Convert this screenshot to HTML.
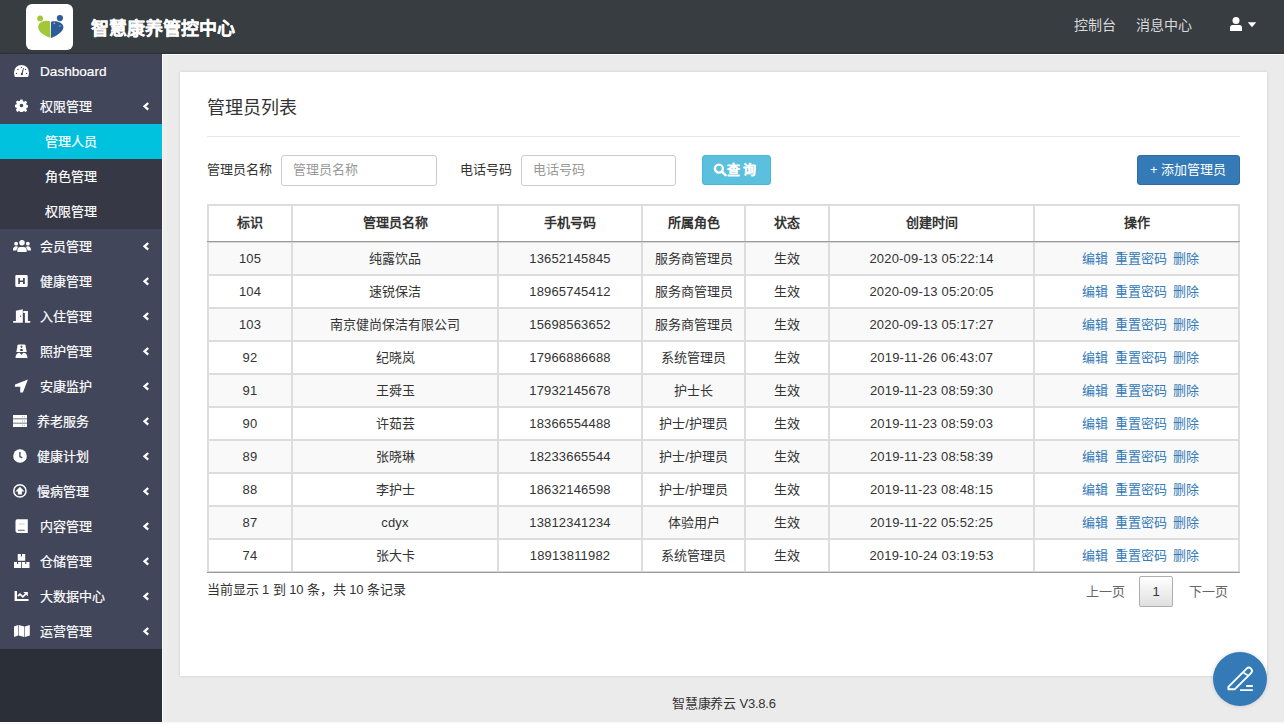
<!DOCTYPE html>
<html lang="zh-CN"><head><meta charset="utf-8">
<style>
*{box-sizing:border-box;margin:0;padding:0}
html,body{width:1284px;height:724px;overflow:hidden;background:#fafafa;font-family:"Liberation Sans",sans-serif;font-size:13px;color:#333}
.abs{position:absolute}
.t{position:absolute;white-space:nowrap}
#hdr{position:absolute;left:0;top:0;width:1284px;height:54px;background:#383d41;box-shadow:inset 0 -2px 2px -1px rgba(0,0,0,.22)}
#logo{position:absolute;left:26px;top:4px;width:47px;height:46px;background:#fff;border-radius:6px}
.hnav{position:absolute;top:15px;font-size:14px;color:#d8dadc;line-height:20px;white-space:nowrap}
#side{position:absolute;left:0;top:54px;width:162px;height:668px;background:#2a2f38}
.mt{position:absolute;color:#fff;font-size:13px;line-height:35px;height:35px;white-space:nowrap;-webkit-text-stroke:.2px #fff}
#content{position:absolute;left:162px;top:54px;width:1122px;height:668px;background:#ebebeb;border-top:1px solid #fafafa}
#box{position:absolute;left:180px;top:72px;width:1087px;height:604px;background:#fff;box-shadow:0 0 3px rgba(0,0,0,.13)}
.cell{position:absolute;text-align:center;white-space:nowrap;line-height:33px;height:33px}
.num{letter-spacing:.18px}
.hl{position:absolute;background:#ddd}
.lnk{color:#337ab7}
</style></head><body>
<div id="hdr"><div id="logo"><svg width="47" height="46" viewBox="0 0 47 46"><circle cx="14.1" cy="14.4" r="2.9" fill="#a2c739"/><circle cx="33.9" cy="14.1" r="3.1" fill="#2d5c98"/><path fill="#a2c739" d="M24 17.3C21 16.3 17 16.6 14.5 18.5 12.5 20 11.8 22.5 12.3 24.5 13 27.5 16 29.8 19 31.5 21 32.7 23 33.3 24.6 33.8Z"/><path fill="#2d5c98" d="M25 17.7C28 17 32 17 35 19 37 20.5 37.8 22.5 37.2 24.5 36.3 27.5 33 30 30 31.7 28.5 32.6 26.5 33.4 25 33.9Z"/><circle cx="28.3" cy="19.4" r=".8" fill="#9fb8d8"/><circle cx="33.9" cy="22" r=".8" fill="#9fb8d8"/></svg></div><div class="t" style="left:91px;top:16.6px;font-size:18px;font-weight:bold;color:#fff;line-height:24px;-webkit-text-stroke:.12px #fff">智慧康养管控中心</div><div class="hnav" style="left:1074px">控制台</div><div class="hnav" style="left:1136px">消息中心</div><svg class="abs" style="left:1229px;top:17px" width="28" height="14" viewBox="0 0 28 14"><circle cx="7" cy="3.5" r="3.5" fill="#fff"/><path fill="#fff" d="M1 14V10.4C1 8.9 2 7.9 3.4 7.9H10.6C12 7.9 13 8.9 13 10.4V14Z"/><path fill="#fff" d="M18.8 5.2h8.4l-4.2 5z"/></svg></div>
<div id="side"></div>
<div class="abs" style="left:0;top:54px;width:162px;height:595px;background:#42465a"></div>
<div class="abs" style="left:0;top:124px;width:162px;height:105px;background:#363945"></div>
<div class="abs" style="left:0;top:124px;width:162px;height:35px;background:#00c1de"></div>
<div class="mt" style="left:40px;top:54px;font-size:13.6px">Dashboard</div>
<div class="mt" style="left:40px;top:89px">权限管理</div>
<svg class="abs" style="left:142px;top:102px" width="8" height="10" viewBox="0 0 8 10"><path d="M6.2 1L2.5 4.3l3.7 3.3" fill="none" stroke="#fff" stroke-width="2.3"/></svg>
<div class="mt" style="left:45px;top:124px">管理人员</div>
<div class="mt" style="left:45px;top:159px">角色管理</div>
<div class="mt" style="left:45px;top:194px">权限管理</div>
<div class="mt" style="left:40px;top:229px">会员管理</div>
<svg class="abs" style="left:142px;top:242px" width="8" height="10" viewBox="0 0 8 10"><path d="M6.2 1L2.5 4.3l3.7 3.3" fill="none" stroke="#fff" stroke-width="2.3"/></svg>
<div class="mt" style="left:40px;top:264px">健康管理</div>
<svg class="abs" style="left:142px;top:277px" width="8" height="10" viewBox="0 0 8 10"><path d="M6.2 1L2.5 4.3l3.7 3.3" fill="none" stroke="#fff" stroke-width="2.3"/></svg>
<div class="mt" style="left:40px;top:299px">入住管理</div>
<svg class="abs" style="left:142px;top:312px" width="8" height="10" viewBox="0 0 8 10"><path d="M6.2 1L2.5 4.3l3.7 3.3" fill="none" stroke="#fff" stroke-width="2.3"/></svg>
<div class="mt" style="left:40px;top:334px">照护管理</div>
<svg class="abs" style="left:142px;top:347px" width="8" height="10" viewBox="0 0 8 10"><path d="M6.2 1L2.5 4.3l3.7 3.3" fill="none" stroke="#fff" stroke-width="2.3"/></svg>
<div class="mt" style="left:40px;top:369px">安康监护</div>
<svg class="abs" style="left:142px;top:382px" width="8" height="10" viewBox="0 0 8 10"><path d="M6.2 1L2.5 4.3l3.7 3.3" fill="none" stroke="#fff" stroke-width="2.3"/></svg>
<div class="mt" style="left:37px;top:404px">养老服务</div>
<svg class="abs" style="left:142px;top:417px" width="8" height="10" viewBox="0 0 8 10"><path d="M6.2 1L2.5 4.3l3.7 3.3" fill="none" stroke="#fff" stroke-width="2.3"/></svg>
<div class="mt" style="left:37px;top:439px">健康计划</div>
<svg class="abs" style="left:142px;top:452px" width="8" height="10" viewBox="0 0 8 10"><path d="M6.2 1L2.5 4.3l3.7 3.3" fill="none" stroke="#fff" stroke-width="2.3"/></svg>
<div class="mt" style="left:37px;top:474px">慢病管理</div>
<svg class="abs" style="left:142px;top:487px" width="8" height="10" viewBox="0 0 8 10"><path d="M6.2 1L2.5 4.3l3.7 3.3" fill="none" stroke="#fff" stroke-width="2.3"/></svg>
<div class="mt" style="left:40px;top:509px">内容管理</div>
<svg class="abs" style="left:142px;top:522px" width="8" height="10" viewBox="0 0 8 10"><path d="M6.2 1L2.5 4.3l3.7 3.3" fill="none" stroke="#fff" stroke-width="2.3"/></svg>
<div class="mt" style="left:40px;top:544px">仓储管理</div>
<svg class="abs" style="left:142px;top:557px" width="8" height="10" viewBox="0 0 8 10"><path d="M6.2 1L2.5 4.3l3.7 3.3" fill="none" stroke="#fff" stroke-width="2.3"/></svg>
<div class="mt" style="left:40px;top:579px">大数据中心</div>
<svg class="abs" style="left:142px;top:592px" width="8" height="10" viewBox="0 0 8 10"><path d="M6.2 1L2.5 4.3l3.7 3.3" fill="none" stroke="#fff" stroke-width="2.3"/></svg>
<div class="mt" style="left:40px;top:614px">运营管理</div>
<svg class="abs" style="left:142px;top:627px" width="8" height="10" viewBox="0 0 8 10"><path d="M6.2 1L2.5 4.3l3.7 3.3" fill="none" stroke="#fff" stroke-width="2.3"/></svg>
<svg class="abs" style="left:14px;top:64px" width="15" height="13" viewBox="0 0 15 13"><path fill="#fff" d="M7.5.9A7.5 7.5 0 0 0 0 8.4C0 10 .4 11.6 1 13H14C14.6 11.6 15 10 15 8.4A7.5 7.5 0 0 0 7.5.9z"/><g fill="#42465a"><circle cx="3.9" cy="5.4" r=".7"/><circle cx="2.5" cy="9.4" r=".7"/><circle cx="7.4" cy="3.4" r=".7"/><circle cx="11.5" cy="5.4" r=".7"/><circle cx="12.6" cy="9.4" r=".7"/><path d="M7.2 10.2L9.1 4.1 9.9 4.3 8.5 10.5z"/><circle cx="7.8" cy="10.2" r="1.1"/></g></svg>
<svg class="abs" style="left:14.9px;top:99.4px" width="13" height="13" viewBox="0 0 13 13"><g transform="scale(.8667)"><path fill="#fff" fill-rule="evenodd" d="M6.2 0.5h2.6l.4 2 1.3.6 1.7-1.1 1.8 1.8-1.1 1.7.6 1.3 2 .4v2.6l-2 .4-.6 1.3 1.1 1.7-1.8 1.8-1.7-1.1-1.3.6-.4 2H6.2l-.4-2-1.3-.6-1.7 1.1L1 12.8l1.1-1.7-.6-1.3-2-.4V6.8l2-.4.6-1.3L1 3.4 2.8 1.6l1.7 1.1 1.3-.6zM7.5 5.4a2.1 2.1 0 1 0 0 4.2 2.1 2.1 0 1 0 0-4.2z"/></g></svg>
<svg class="abs" style="left:12.5px;top:240px" width="18" height="12" viewBox="0 0 18 12"><g transform="scale(.947,.923)"><circle fill="#fff" cx="9.5" cy="3" r="2.9"/><circle fill="#fff" cx="3.3" cy="4" r="2"/><circle fill="#fff" cx="15.7" cy="4" r="2"/><path fill="#fff" d="M4.6 13V10.4C4.6 8.7 5.9 7.5 7.6 7.5H11.4C13.1 7.5 14.4 8.7 14.4 10.4V13Z"/><path fill="#fff" d="M0 10.5c0-2 1.2-3.6 3.3-3.6 1 0 1.6.3 2.1.7C4.4 8.6 3.8 9.8 3.6 11.3H0z"/><path fill="#fff" d="M19 10.5c0-2-1.2-3.6-3.3-3.6-1 0-1.6.3-2.1.7 1 1 1.6 2.2 1.8 3.7H19z"/></g></svg>
<svg class="abs" style="left:15px;top:275px" width="13" height="12" viewBox="0 0 13 12"><path fill="#fff" fill-rule="evenodd" d="M1.6 0h9.8A1.3 1.3 0 0 1 12.7 1.3v9.3A1.3 1.3 0 0 1 11.4 11.9H1.6A1.3 1.3 0 0 1 .3 10.6V1.3A1.3 1.3 0 0 1 1.6 0zM3.2 3V9.1H4.9V6.9H8V9.1H9.8V3H8V5.6H4.9V3z"/></svg>
<svg class="abs" style="left:13px;top:308px" width="18" height="15" viewBox="0 0 18 15"><path fill="#fff" d="M2.9 2.7L9.8 1.3V14.8H0.2V13H2.9Z"/><path fill="#fff" d="M10.3 3.1H14.9V13H17.2V14.8H11.9V5.1H10.3Z"/><circle fill="#42465a" cx="7.6" cy="8.2" r=".65"/></svg>
<svg class="abs" style="left:15px;top:343px" width="13" height="15" viewBox="0 0 13 15"><path fill="#fff" d="M3.6 1.4H9.4Q10.2 1.4 10.4 2.2L11.7 8.9H1.3L2.6 2.2Q2.8 1.4 3.6 1.4z"/><rect fill="#42465a" x="5" y="6" width="3" height="2" rx=".9"/><path fill="#42465a" d="M6.1 2.6h.8v.8h.8v.8h-.8v.8h-.8v-.8h-.8v-.8h.8z"/><path fill="#fff" d="M0.5 14.9C0.5 11.6 2.3 9.8 4.6 9.8L6.5 11.7 8.4 9.8C10.7 9.8 12.5 11.6 12.5 14.9Z"/></svg>
<svg class="abs" style="left:14px;top:379px" width="15" height="14" viewBox="0 0 15 14"><path fill="#fff" d="M13.9 0.5L1.1 5.5Q.9 5.6 .9 5.9V7.5Q.9 7.8 1.2 7.8H6.2V13.2Q6.2 13.6 6.6 13.6H8.5Q8.9 13.6 9 13.2Z"/></svg>
<svg class="abs" style="left:13px;top:415px" width="14" height="12" viewBox="0 0 14 12"><path fill="#fff" d="M0 0h14v3.6H0zM0 4.2h14v3.6H0zM0 8.4h14V12H0z"/><g fill="#9da0ad"><circle cx="9.5" cy="1.8" r=".55"/><circle cx="11.4" cy="1.8" r=".55"/><circle cx="9.5" cy="6" r=".55"/><circle cx="11.4" cy="6" r=".55"/><circle cx="9.5" cy="10.2" r=".55"/><circle cx="11.4" cy="10.2" r=".55"/></g></svg>
<svg class="abs" style="left:13px;top:449px" width="14" height="14" viewBox="0 0 14 14"><circle fill="#fff" cx="7" cy="7" r="6.8"/><path fill="none" stroke="#42465a" stroke-width="1.3" d="M6.9 3.1V7.6L9.3 8.8"/></svg>
<svg class="abs" style="left:13px;top:484px" width="14" height="14" viewBox="0 0 14 14"><circle fill="none" stroke="#fff" stroke-width="1.5" cx="6.9" cy="6.9" r="6.1"/><path fill="#fff" d="M6.9 2.8L11.4 7.6H8.9v2.8H4.9V7.6H2.4z"/></svg>
<svg class="abs" style="left:15px;top:519px" width="13" height="14" viewBox="0 0 13 14"><path fill="#fff" d="M2.3.3H12.8V13.9H2.3A1.8 1.8 0 0 1 .5 12.1V2.1A1.8 1.8 0 0 1 2.3.3z"/><path fill="#42465a" d="M3 10.8h6.7v.9H3z"/><path fill="#cfd0d8" d="M4 4.2h5.7v.5H4zM4 5.6h5.7v.5H4z"/></svg>
<svg class="abs" style="left:14px;top:554px" width="16" height="14" viewBox="0 0 16 14"><path fill="#fff" d="M3.75 0h7.45v6.8H3.75zM0 7.9h7.2v6H0zM8 7.9h7.5v6H8z"/><path fill="#42465a" d="M6.9 0h1.1v2.4H6.9zM3 7.9h1.1V10H3zM11.2 7.9h1.1V10h-1.1z"/></svg>
<svg class="abs" style="left:14px;top:590px" width="15" height="12" viewBox="0 0 15 12"><path fill="#fff" d="M0.6 0.9H3V9H14.5V11H0.6Z"/><path fill="none" stroke="#fff" stroke-width="1.7" d="M3.9 6.1L6 4.1 8.8 6.9 12.4 3.4"/><path fill="#fff" d="M9.3 2.1H13.9V6.3z"/></svg>
<svg class="abs" style="left:14px;top:625px" width="16" height="12" viewBox="0 0 16 12"><path fill="#fff" d="M0 1.4L4.1 0v10.6L0 12zM4.7 0l5.6 1.4V12L4.7 10.6zM10.9 1.4L15.8 0v10.6L10.9 12z"/></svg>
<div id="content"></div>
<div class="abs" style="left:162px;top:55px;width:1px;height:667px;background:#fafafa"></div>
<div class="abs" style="left:163px;top:55px;width:4px;height:667px;background:#eeeeee"></div>
<div id="box"></div>
<div class="t" style="left:207px;top:93px;font-size:18px;line-height:30px;color:#333">管理员列表</div>
<div class="abs" style="left:207px;top:136px;width:1033px;height:1px;background:#e8e8e8"></div>
<div class="t" style="left:207px;top:155px;line-height:30px;color:#333">管理员名称</div>
<div class="abs" style="left:281px;top:155px;width:156px;height:31px;border:1px solid #ccc;border-radius:3px"></div>
<div class="t" style="left:293px;top:155px;line-height:30px;color:#999">管理员名称</div>
<div class="t" style="left:460px;top:155px;line-height:30px;color:#333">电话号码</div>
<div class="abs" style="left:521px;top:155px;width:155px;height:31px;border:1px solid #ccc;border-radius:3px"></div>
<div class="t" style="left:533px;top:155px;line-height:30px;color:#999">电话号码</div>
<div class="abs" style="left:702px;top:155px;width:69px;height:30px;background:#5bc0de;border:1px solid #46b8da;border-radius:3px"></div>
<svg class="abs" style="left:713px;top:163px" width="14" height="14" viewBox="0 0 14 14"><circle cx="5.9" cy="5.6" r="4" fill="none" stroke="#fff" stroke-width="2.4"/><path d="M8.9 8.6l3.6 3.6" stroke="#fff" stroke-width="2.6" stroke-linecap="round"/></svg>
<div class="t" style="left:727px;top:155px;line-height:30px;color:#fff;font-weight:bold;letter-spacing:3px;-webkit-text-stroke:.2px #fff">查询</div>
<div class="abs" style="left:1137px;top:155px;width:103px;height:30px;background:#337ab7;border:1px solid #2e6da4;border-radius:3px"></div>
<div class="t" style="left:1150px;top:155px;line-height:30px;color:#fff">+ 添加管理员</div>
<div class="abs" style="left:209px;top:242px;width:1029px;height:330px;background:#fff"></div>
<div class="abs" style="left:209px;top:242px;width:1029px;height:33px;background:#f9f9f9"></div>
<div class="abs" style="left:209px;top:308px;width:1029px;height:33px;background:#f9f9f9"></div>
<div class="abs" style="left:209px;top:374px;width:1029px;height:33px;background:#f9f9f9"></div>
<div class="abs" style="left:209px;top:440px;width:1029px;height:33px;background:#f9f9f9"></div>
<div class="abs" style="left:209px;top:506px;width:1029px;height:33px;background:#f9f9f9"></div>
<div class="hl" style="left:207px;top:204px;width:1033px;height:2px"></div>
<div class="hl" style="left:207px;top:274px;width:1033px;height:2px"></div>
<div class="hl" style="left:207px;top:307px;width:1033px;height:2px"></div>
<div class="hl" style="left:207px;top:340px;width:1033px;height:2px"></div>
<div class="hl" style="left:207px;top:373px;width:1033px;height:2px"></div>
<div class="hl" style="left:207px;top:406px;width:1033px;height:2px"></div>
<div class="hl" style="left:207px;top:439px;width:1033px;height:2px"></div>
<div class="hl" style="left:207px;top:472px;width:1033px;height:2px"></div>
<div class="hl" style="left:207px;top:505px;width:1033px;height:2px"></div>
<div class="hl" style="left:207px;top:538px;width:1033px;height:2px"></div>
<div class="hl" style="left:207px;top:204px;width:2px;height:369px"></div>
<div class="hl" style="left:291px;top:204px;width:2px;height:369px"></div>
<div class="hl" style="left:497px;top:204px;width:2px;height:369px"></div>
<div class="hl" style="left:641px;top:204px;width:2px;height:369px"></div>
<div class="hl" style="left:744px;top:204px;width:2px;height:369px"></div>
<div class="hl" style="left:828px;top:204px;width:2px;height:369px"></div>
<div class="hl" style="left:1033px;top:204px;width:2px;height:369px"></div>
<div class="hl" style="left:1238px;top:204px;width:2px;height:369px"></div>
<div class="hl" style="left:207px;top:241px;width:1033px;height:1px;background:#9c9c9c"></div>
<div class="hl" style="left:207px;top:242px;width:1033px;height:1px;background:#d6d6d6"></div>
<div class="hl" style="left:207px;top:571px;width:1033px;height:1px;background:#d6d6d6"></div>
<div class="hl" style="left:207px;top:572px;width:1033px;height:1px;background:#9c9c9c"></div>
<div class="cell" style="left:208px;width:84px;top:206px;height:34px;line-height:34px;font-weight:bold">标识</div>
<div class="cell" style="left:292px;width:206px;top:206px;height:34px;line-height:34px;font-weight:bold">管理员名称</div>
<div class="cell" style="left:498px;width:144px;top:206px;height:34px;line-height:34px;font-weight:bold">手机号码</div>
<div class="cell" style="left:642px;width:103px;top:206px;height:34px;line-height:34px;font-weight:bold">所属角色</div>
<div class="cell" style="left:745px;width:84px;top:206px;height:34px;line-height:34px;font-weight:bold">状态</div>
<div class="cell" style="left:829px;width:205px;top:206px;height:34px;line-height:34px;font-weight:bold">创建时间</div>
<div class="cell" style="left:1034px;width:205px;top:206px;height:34px;line-height:34px;font-weight:bold">操作</div>
<div class="cell num" style="left:208px;width:84px;top:242px">105</div>
<div class="cell" style="left:292px;width:206px;top:242px">纯露饮品</div>
<div class="cell num" style="left:498px;width:144px;top:242px">13652145845</div>
<div class="cell" style="left:642px;width:103px;top:242px">服务商管理员</div>
<div class="cell" style="left:745px;width:84px;top:242px">生效</div>
<div class="cell num" style="left:829px;width:205px;top:242px">2020-09-13 05:22:14</div>
<div class="t lnk" style="left:1082px;top:242px;line-height:33px">编辑</div><div class="t lnk" style="left:1115px;top:242px;line-height:33px">重置密码</div><div class="t lnk" style="left:1173px;top:242px;line-height:33px">删除</div>
<div class="cell num" style="left:208px;width:84px;top:275px">104</div>
<div class="cell" style="left:292px;width:206px;top:275px">速锐保洁</div>
<div class="cell num" style="left:498px;width:144px;top:275px">18965745412</div>
<div class="cell" style="left:642px;width:103px;top:275px">服务商管理员</div>
<div class="cell" style="left:745px;width:84px;top:275px">生效</div>
<div class="cell num" style="left:829px;width:205px;top:275px">2020-09-13 05:20:05</div>
<div class="t lnk" style="left:1082px;top:275px;line-height:33px">编辑</div><div class="t lnk" style="left:1115px;top:275px;line-height:33px">重置密码</div><div class="t lnk" style="left:1173px;top:275px;line-height:33px">删除</div>
<div class="cell num" style="left:208px;width:84px;top:308px">103</div>
<div class="cell" style="left:292px;width:206px;top:308px">南京健尚保洁有限公司</div>
<div class="cell num" style="left:498px;width:144px;top:308px">15698563652</div>
<div class="cell" style="left:642px;width:103px;top:308px">服务商管理员</div>
<div class="cell" style="left:745px;width:84px;top:308px">生效</div>
<div class="cell num" style="left:829px;width:205px;top:308px">2020-09-13 05:17:27</div>
<div class="t lnk" style="left:1082px;top:308px;line-height:33px">编辑</div><div class="t lnk" style="left:1115px;top:308px;line-height:33px">重置密码</div><div class="t lnk" style="left:1173px;top:308px;line-height:33px">删除</div>
<div class="cell num" style="left:208px;width:84px;top:341px">92</div>
<div class="cell" style="left:292px;width:206px;top:341px">纪晓岚</div>
<div class="cell num" style="left:498px;width:144px;top:341px">17966886688</div>
<div class="cell" style="left:642px;width:103px;top:341px">系统管理员</div>
<div class="cell" style="left:745px;width:84px;top:341px">生效</div>
<div class="cell num" style="left:829px;width:205px;top:341px">2019-11-26 06:43:07</div>
<div class="t lnk" style="left:1082px;top:341px;line-height:33px">编辑</div><div class="t lnk" style="left:1115px;top:341px;line-height:33px">重置密码</div><div class="t lnk" style="left:1173px;top:341px;line-height:33px">删除</div>
<div class="cell num" style="left:208px;width:84px;top:374px">91</div>
<div class="cell" style="left:292px;width:206px;top:374px">王舜玉</div>
<div class="cell num" style="left:498px;width:144px;top:374px">17932145678</div>
<div class="cell" style="left:642px;width:103px;top:374px">护士长</div>
<div class="cell" style="left:745px;width:84px;top:374px">生效</div>
<div class="cell num" style="left:829px;width:205px;top:374px">2019-11-23 08:59:30</div>
<div class="t lnk" style="left:1082px;top:374px;line-height:33px">编辑</div><div class="t lnk" style="left:1115px;top:374px;line-height:33px">重置密码</div><div class="t lnk" style="left:1173px;top:374px;line-height:33px">删除</div>
<div class="cell num" style="left:208px;width:84px;top:407px">90</div>
<div class="cell" style="left:292px;width:206px;top:407px">许茹芸</div>
<div class="cell num" style="left:498px;width:144px;top:407px">18366554488</div>
<div class="cell" style="left:642px;width:103px;top:407px">护士/护理员</div>
<div class="cell" style="left:745px;width:84px;top:407px">生效</div>
<div class="cell num" style="left:829px;width:205px;top:407px">2019-11-23 08:59:03</div>
<div class="t lnk" style="left:1082px;top:407px;line-height:33px">编辑</div><div class="t lnk" style="left:1115px;top:407px;line-height:33px">重置密码</div><div class="t lnk" style="left:1173px;top:407px;line-height:33px">删除</div>
<div class="cell num" style="left:208px;width:84px;top:440px">89</div>
<div class="cell" style="left:292px;width:206px;top:440px">张晓琳</div>
<div class="cell num" style="left:498px;width:144px;top:440px">18233665544</div>
<div class="cell" style="left:642px;width:103px;top:440px">护士/护理员</div>
<div class="cell" style="left:745px;width:84px;top:440px">生效</div>
<div class="cell num" style="left:829px;width:205px;top:440px">2019-11-23 08:58:39</div>
<div class="t lnk" style="left:1082px;top:440px;line-height:33px">编辑</div><div class="t lnk" style="left:1115px;top:440px;line-height:33px">重置密码</div><div class="t lnk" style="left:1173px;top:440px;line-height:33px">删除</div>
<div class="cell num" style="left:208px;width:84px;top:473px">88</div>
<div class="cell" style="left:292px;width:206px;top:473px">李护士</div>
<div class="cell num" style="left:498px;width:144px;top:473px">18632146598</div>
<div class="cell" style="left:642px;width:103px;top:473px">护士/护理员</div>
<div class="cell" style="left:745px;width:84px;top:473px">生效</div>
<div class="cell num" style="left:829px;width:205px;top:473px">2019-11-23 08:48:15</div>
<div class="t lnk" style="left:1082px;top:473px;line-height:33px">编辑</div><div class="t lnk" style="left:1115px;top:473px;line-height:33px">重置密码</div><div class="t lnk" style="left:1173px;top:473px;line-height:33px">删除</div>
<div class="cell num" style="left:208px;width:84px;top:506px">87</div>
<div class="cell num" style="left:292px;width:206px;top:506px">cdyx</div>
<div class="cell num" style="left:498px;width:144px;top:506px">13812341234</div>
<div class="cell" style="left:642px;width:103px;top:506px">体验用户</div>
<div class="cell" style="left:745px;width:84px;top:506px">生效</div>
<div class="cell num" style="left:829px;width:205px;top:506px">2019-11-22 05:52:25</div>
<div class="t lnk" style="left:1082px;top:506px;line-height:33px">编辑</div><div class="t lnk" style="left:1115px;top:506px;line-height:33px">重置密码</div><div class="t lnk" style="left:1173px;top:506px;line-height:33px">删除</div>
<div class="cell num" style="left:208px;width:84px;top:539px">74</div>
<div class="cell" style="left:292px;width:206px;top:539px">张大卡</div>
<div class="cell num" style="left:498px;width:144px;top:539px">18913811982</div>
<div class="cell" style="left:642px;width:103px;top:539px">系统管理员</div>
<div class="cell" style="left:745px;width:84px;top:539px">生效</div>
<div class="cell num" style="left:829px;width:205px;top:539px">2019-10-24 03:19:53</div>
<div class="t lnk" style="left:1082px;top:539px;line-height:33px">编辑</div><div class="t lnk" style="left:1115px;top:539px;line-height:33px">重置密码</div><div class="t lnk" style="left:1173px;top:539px;line-height:33px">删除</div>
<div class="t" style="left:207px;top:575px;line-height:30px;color:#333;letter-spacing:-.1px">当前显示 1 到 10 条，共 10 条记录</div>
<div class="t" style="left:1086px;top:577px;line-height:30px;color:#666">上一页</div>
<div class="abs" style="left:1139px;top:576px;width:34px;height:31px;border:1px solid #adadad;border-radius:2px;background:linear-gradient(#fff,#e0e0e0);text-align:center;line-height:29px;color:#333">1</div>
<div class="t" style="left:1189px;top:577px;line-height:30px;color:#666">下一页</div>
<div class="t" style="left:672px;top:689px;line-height:30px;color:#333;letter-spacing:-.2px">智慧康养云 V3.8.6</div>
<div class="abs" style="left:1213px;top:652px;width:54px;height:54px;border-radius:50%;background:#337ab7;box-shadow:0 0 4px rgba(0,0,0,.15)"></div>
<svg class="abs" style="left:1213px;top:652px" width="54" height="54" viewBox="0 0 54 54"><path d="M15.4 34.9V37.2H21.9L38 21.1A3.1 3.1 0 0 0 33.6 16.7Z" fill="none" stroke="#fff" stroke-width="1.9" stroke-linejoin="round"/><path d="M30.6 20.8L35.3 23.6" stroke="#fff" stroke-width="1.6"/><path fill="#fff" d="M27 37.2h12.8v1.9H27zM33.2 33h6.6v1.9h-6.6z"/></svg>
<div class="abs" style="left:0;top:722px;width:1284px;height:2px;background:#fafafa"></div>
</body></html>
